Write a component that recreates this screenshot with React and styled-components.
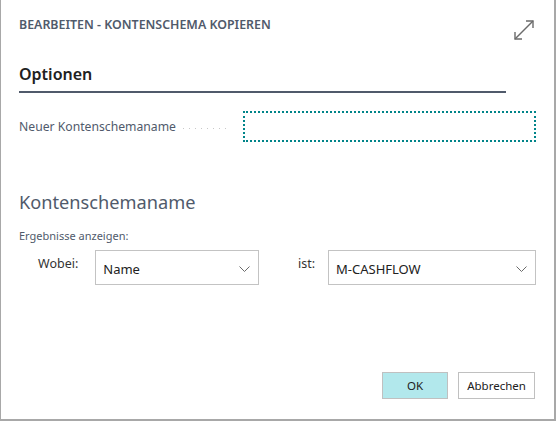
import { createGlobalStyle } from 'styled-components';
import styled from 'styled-components';

const GlobalStyle = createGlobalStyle`
	html, body {
		margin: 0;
		padding: 0;
		background: #ffffff;
	}
	body {
		font-family: 'Noto Sans', 'Open Sans', sans-serif;
		color: #505a6b;
	}
`;

const Chevron = () => (
	<svg width='11' height='6' viewBox='0 0 11 6'>
		<path d='M0.5 0.5 L5.5 5.5 L10.5 0.5' fill='none' stroke='#6a6a6a' strokeWidth='1' />
	</svg>
);

const ExpandIcon = () => (
	<svg width='22' height='22' viewBox='0 0 22 22'>
		<g fill='none' stroke='#6b6b6b' strokeWidth='1.4'>
			<path d='M2 20 L20 2' />
			<path d='M13 2 H20 V9' />
			<path d='M2 13 V20 H9' />
		</g>
	</svg>
);

const App = () => {
	return (
		<>
			<GlobalStyle />
			<Dialog>
				<Header>
					<Title>Bearbeiten - Kontenschema kopieren</Title>
					<IconButton>
						<ExpandIcon />
					</IconButton>
				</Header>
				<Group>
					<GroupTitle>Optionen</GroupTitle>
					<FieldRow>
						<FieldLabel>Neuer Kontenschemaname</FieldLabel>
						<Dots />
						<TextInput />
					</FieldRow>
				</Group>
				<FilterSection>
					<FilterTitle>Kontenschemaname</FilterTitle>
					<FilterHint>Ergebnisse anzeigen:</FilterHint>
					<FilterRow>
						<FilterLabel>Wobei:</FilterLabel>
						<Select $width={166}>
							<span>Name</span>
							<Chevron />
						</Select>
						<FilterLabel $gap={39}>ist:</FilterLabel>
						<Select $width={211}>
							<span>M-CASHFLOW</span>
							<Chevron />
						</Select>
					</FilterRow>
				</FilterSection>
				<Footer>
					<Button $width={66} $primary>OK</Button>
					<Button $width={77}>Abbrechen</Button>
				</Footer>
			</Dialog>
		</>
	);
};

const Dialog = styled.div`
	box-sizing: border-box;
	width: 556px;
	height: 421px;
	background: #ffffff;
	border: 1px solid #a8a8a8;
	border-top: none;
	border-right-width: 2px;
	border-bottom-width: 2px;
	display: flex;
	flex-direction: column;
`;

const Header = styled.div`
	display: flex;
	justify-content: space-between;
	align-items: flex-start;
	padding: 17px 19px 0 18px;
	height: 46px;
`;

const Title = styled.h1`
	margin: 0;
	font-size: 12.4px;
	font-weight: 600;
	text-transform: uppercase;
	color: #505a6b;
	line-height: 16px;
`;

const IconButton = styled.div`
	width: 22px;
	height: 22px;
	margin-top: 2px;
`;

const Group = styled.div`
	padding: 0 48px 0 18px;
`;

const GroupTitle = styled.h2`
	margin: 0;
	font-size: 16px;
	font-weight: 600;
	color: #212121;
	line-height: 22px;
	padding-bottom: 6px;
	border-bottom: 2px solid #505a6b;
`;

const FieldRow = styled.div`
	display: flex;
	align-items: center;
	margin-top: 18px;
	margin-right: -30px;
`;

const FieldLabel = styled.span`
	font-size: 12.2px;
	color: #505a6b;
	white-space: nowrap;
`;

const Dots = styled.span`
	width: 48px;
	height: 1px;
	margin: 3px 12px 0 7px;
	background-image: linear-gradient(to right, #c8c8c8 1px, transparent 1px);
	background-size: 6px 1px;
	background-repeat: repeat-x;
`;

const TextInput = styled.div`
	box-sizing: border-box;
	flex: 1;
	height: 31px;
	border: 2px dotted #008489;
`;

const FilterSection = styled.div`
	padding: 0 18px;
	margin-top: 47px;
`;

const FilterTitle = styled.h2`
	margin: 0;
	font-size: 18.2px;
	font-weight: 400;
	color: #505a6b;
	line-height: 26px;
`;

const FilterHint = styled.div`
	margin-top: 13px;
	font-size: 11px;
	color: #505a6b;
`;

const FilterRow = styled.div`
	display: flex;
	align-items: center;
	margin-top: 7px;
	padding-left: 19px;
`;

const FilterLabel = styled.span`
	font-size: 12.5px;
	color: #333333;
	margin-left: ${(p) => (p.$gap ? `${p.$gap}px` : '0')};
	margin-right: ${(p) => (p.$gap ? '13px' : '17px')};
	margin-top: -8px;
`;

const Select = styled.div`
	box-sizing: border-box;
	width: ${(p) => p.$width}px;
	height: 35px;
	border: 1px solid #c3c3c3;
	display: flex;
	align-items: center;
	justify-content: space-between;
	padding: 2px 8px 0 7px;
	font-size: 13px;
	color: #212121;
`;

const Footer = styled.div`
	margin-top: auto;
	display: flex;
	justify-content: flex-end;
	gap: 10px;
	padding: 0 19px 20px 0;
`;

const Button = styled.button`
	box-sizing: border-box;
	width: ${(p) => p.$width}px;
	height: 27px;
	padding: 0;
	font-family: 'Noto Sans', sans-serif;
	font-size: 11.5px;
	color: #212121;
	background: ${(p) => (p.$primary ? '#b2e8ec' : '#ffffff')};
	border: 1px solid #c0c0c0;
`;

export default App;
